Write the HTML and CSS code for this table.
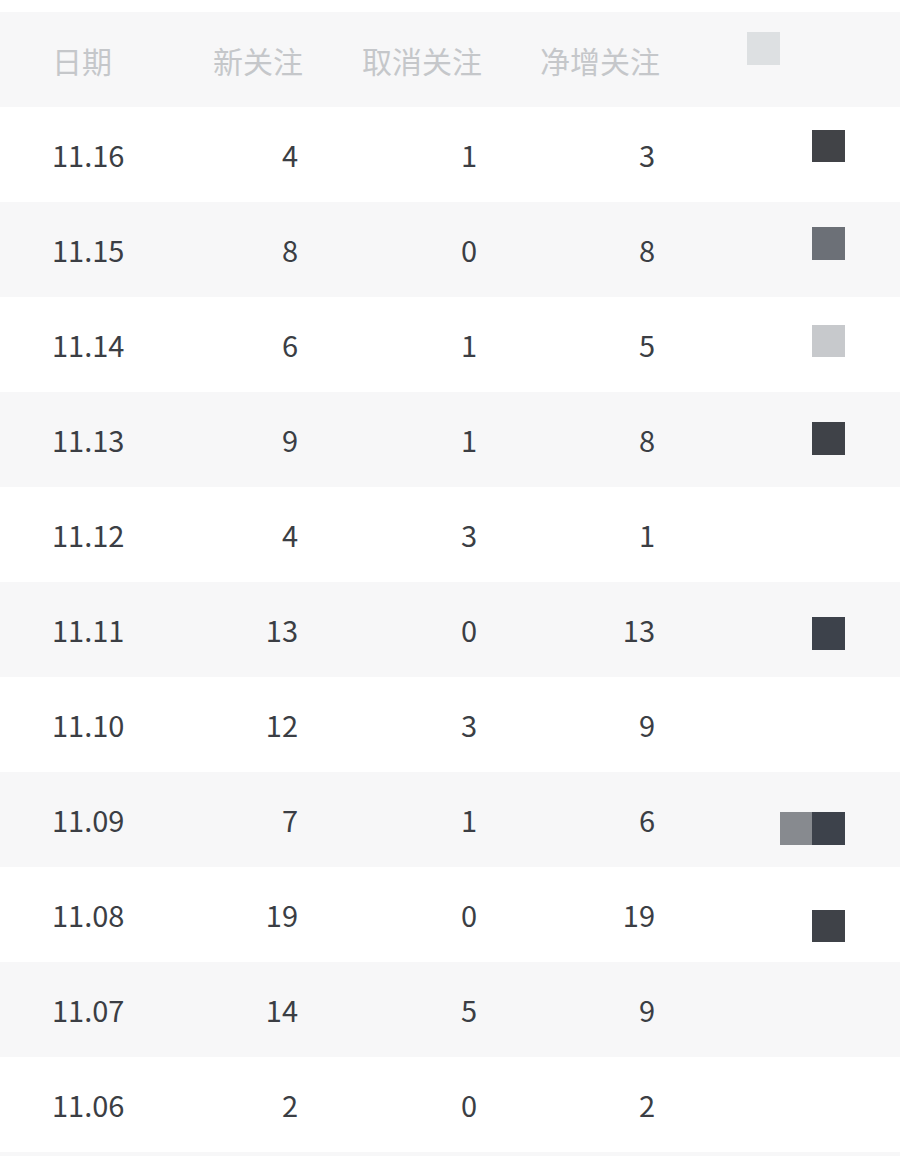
FILE: index.html
```html
<!DOCTYPE html>
<html lang="zh-CN">
<head>
<meta charset="utf-8">
<title>关注数据</title>
<link rel="stylesheet" href="styles.css">
</head>
<body>
<div class="stage">
  <div class="table">
    <div class="row head">
      <div class="cell date">日期</div>
      <div class="cell num">新关注</div>
      <div class="cell num">取消关注</div>
      <div class="cell num">净增关注</div>
    </div>
    <div class="row"><div class="cell date">11.16</div><div class="cell num">4</div><div class="cell num">1</div><div class="cell num">3</div></div>
    <div class="row alt"><div class="cell date">11.15</div><div class="cell num">8</div><div class="cell num">0</div><div class="cell num">8</div></div>
    <div class="row"><div class="cell date">11.14</div><div class="cell num">6</div><div class="cell num">1</div><div class="cell num">5</div></div>
    <div class="row alt"><div class="cell date">11.13</div><div class="cell num">9</div><div class="cell num">1</div><div class="cell num">8</div></div>
    <div class="row"><div class="cell date">11.12</div><div class="cell num">4</div><div class="cell num">3</div><div class="cell num">1</div></div>
    <div class="row alt"><div class="cell date">11.11</div><div class="cell num">13</div><div class="cell num">0</div><div class="cell num">13</div></div>
    <div class="row"><div class="cell date">11.10</div><div class="cell num">12</div><div class="cell num">3</div><div class="cell num">9</div></div>
    <div class="row alt"><div class="cell date">11.09</div><div class="cell num">7</div><div class="cell num">1</div><div class="cell num">6</div></div>
    <div class="row"><div class="cell date">11.08</div><div class="cell num">19</div><div class="cell num">0</div><div class="cell num">19</div></div>
    <div class="row alt"><div class="cell date">11.07</div><div class="cell num">14</div><div class="cell num">5</div><div class="cell num">9</div></div>
    <div class="row"><div class="cell date">11.06</div><div class="cell num">2</div><div class="cell num">0</div><div class="cell num">2</div></div>
    <div class="row alt tail"></div>
  </div>
  <div class="mosaic">
    <div class="mrow"><span class="px c1 s-light"></span></div>
    <div class="mrow"><span class="px c3 s-dark1"></span></div>
    <div class="mrow"><span class="px c3 s-mid"></span></div>
    <div class="mrow"><span class="px c3 s-pale"></span></div>
    <div class="mrow"><span class="px c3 s-dark2"></span></div>
    <div class="mrow"></div>
    <div class="mrow"><span class="px c3 s-dark3"></span></div>
    <div class="mrow"></div>
    <div class="mrow"><span class="px c2 s-grey"></span><span class="px c3 s-dark3"></span></div>
    <div class="mrow"><span class="px c3 s-dark2"></span></div>
  </div>
</div>
</body>
</html>
```

FILE: styles.css
```css
* { box-sizing: border-box; }

html, body {
  margin: 0;
  padding: 0;
  background: #ffffff;
}

body {
  font-family: "Noto Sans CJK SC", "Noto Sans", sans-serif;
  font-size: 29px;
  color: #3b3e44;
  overflow: hidden;
  height: 1156px;
}

.stage {
  display: grid;
  padding-top: 12px;
  height: 1156px;
  overflow: hidden;
}

.table,
.mosaic {
  grid-area: 1 / 1;
}

.row {
  display: grid;
  grid-template-columns: 130px 121px 179px 178px;
  align-items: center;
  height: 95px;
  padding-left: 52px;
  background: #ffffff;
}

.row.head,
.row.alt {
  background: #f7f7f8;
}

.row.tail {
  height: 4px;
}

.row.head {
  color: #c5c7ca;
  font-size: 30px;
}

.cell {
  line-height: 1;
  white-space: nowrap;
}

.num {
  text-align: right;
}

.row:not(.head) .num {
  padding-right: 5px;
}

.mosaic {
  justify-self: end;
  align-self: start;
  width: 180px;
  margin-top: -12px;
  padding-left: 27px;
  display: flex;
  flex-direction: column;
}

.mrow {
  height: 97.5px;
  padding-top: 32px;
  display: grid;
  grid-template-columns: repeat(3, 32.5px);
  grid-template-rows: 32.5px;
}

.px {
  display: block;
  width: 32.5px;
  height: 32.5px;
  grid-row: 1;
}

.c1 { grid-column: 1; }
.c2 { grid-column: 2; }
.c3 { grid-column: 3; }

.s-light { background: #dde0e2; }
.s-dark1 { background: #414347; }
.s-mid   { background: #6c7077; }
.s-pale  { background: #c7c9cc; }
.s-dark2 { background: #3f4248; }
.s-dark3 { background: #3d424b; }
.s-grey  { background: #878a8f; }
```
